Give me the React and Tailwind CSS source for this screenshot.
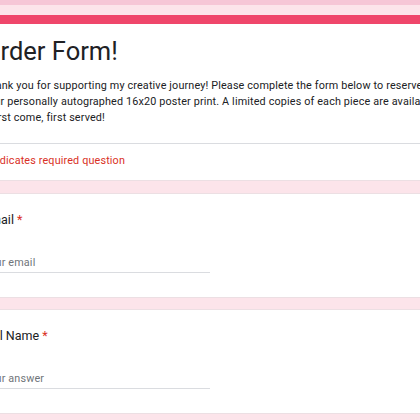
export default function App() {
  const font = { fontFamily: "Roboto, 'Liberation Sans', sans-serif" };

  return (
    <div
      className="w-[420px] h-[420px] overflow-hidden bg-[#fce4ea] text-[#202124]"
      style={font}
    >
      <div className="h-[5px] bg-[#f6c6d6]" />
      <div className="ml-[-39px] w-[530px] pt-[10px] flex flex-col gap-[11px]">
        {/* Header card */}
        <div className="mb-px bg-white rounded-t-[6px] border border-[#ecdfe3] border-t-0 overflow-hidden">
          <div className="h-[9px] bg-[#ef466b]" />
          <div className="px-[21px] pt-[11px] pb-[17px]">
            <h1 className="text-[25.5px] leading-[32px] font-normal">
              Order Form!
            </h1>
            <div className="mt-[11px] text-[10.8px] leading-[16px] tracking-[0.15px] whitespace-nowrap">
              <p>
                Thank you for supporting my creative journey! Please complete
                the form below to reserve
              </p>
              <p>
                your personally autographed 16x20 poster print. A limited
                copies of each piece are available,
              </p>
              <p className="pl-[8px]">first come, first served!</p>
            </div>
          </div>
          <div className="h-px bg-[#dadce0] mx-[-1px]" />
          <div className="px-[21px] pt-[9px] pb-[11px] text-[10.8px] leading-[16px] tracking-[0.15px] text-[#d93025]">
            * Indicates required question
          </div>
        </div>

        <Question label="Email" placeholder="Your email" />
        <Question label="Full Name" placeholder="Your answer" />
      </div>
    </div>
  );
}

function Question({ label, placeholder }) {
  return (
    <div className="bg-white rounded-[6px] border border-[#ecdfe3] px-[21px] pt-[17px] pb-[24px]">
      <div className="text-[12.5px] leading-[18px]">
        {label} <span className="text-[#d93025]">*</span>
      </div>
      <div className="mt-[26px] w-[227px] border-b border-[#dadce0] pb-px text-[10.8px] leading-[16px] tracking-[0.15px] text-[#70757a]">
        {placeholder}
      </div>
    </div>
  );
}
